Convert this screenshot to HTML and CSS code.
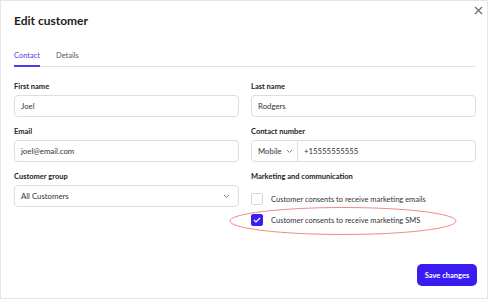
FILE: index.html
```html
<!DOCTYPE html>
<html lang="en">
<head>
    <meta charset="UTF-8">
    <meta name="viewport" content="width=device-width, initial-scale=1.0">
    <title>Edit customer</title>
    <link rel="stylesheet" href="styles.css">
</head>
<body>
    <div class="modal">
        <button class="close" aria-label="Close">
            <svg width="9" height="9" viewBox="0 0 9 9"><path d="M1 1L8 8M8 1L1 8" stroke="#6b6b6b" stroke-width="1.2" fill="none"/></svg>
        </button>

        <h1 class="title">Edit customer</h1>

        <div class="tabs">
            <span class="tab active">Contact</span>
            <span class="tab">Details</span>
        </div>

        <div class="grid">
            <div class="field">
                <label>First name</label>
                <div class="input">Joel</div>
            </div>
            <div class="field">
                <label>Last name</label>
                <div class="input">Rodgers</div>
            </div>
            <div class="field">
                <label>Email</label>
                <div class="input">joel@email.com</div>
            </div>
            <div class="field">
                <label>Contact number</label>
                <div class="input phone">
                    <span class="phone-type">Mobile
                        <svg width="7" height="5" viewBox="0 0 7 5"><path d="M1 1L3.5 3.5L6 1" stroke="#777" stroke-width="0.9" fill="none"/></svg>
                    </span>
                    <span class="phone-number">+15555555555</span>
                </div>
            </div>
            <div class="field">
                <label>Customer group</label>
                <div class="input select">
                    <span>All Customers</span>
                    <svg width="7" height="5" viewBox="0 0 7 5"><path d="M1 1L3.5 3.5L6 1" stroke="#777" stroke-width="0.9" fill="none"/></svg>
                </div>
            </div>
            <div class="field">
                <label>Marketing and communication</label>
                <div class="checks">
                    <div class="check-row">
                        <span class="checkbox"></span>
                        <span>Customer consents to receive marketing emails</span>
                    </div>
                    <div class="check-row">
                        <span class="checkbox checked">
                            <svg width="8" height="6" viewBox="0 0 8 6"><path d="M1 3L3 5L7 1" stroke="#fff" stroke-width="1.1" fill="none"/></svg>
                        </span>
                        <span>Customer consents to receive marketing SMS</span>
                    </div>
                </div>
            </div>
        </div>

        <div class="footer">
            <button class="save">Save changes</button>
        </div>

        <svg class="highlight" width="228" height="30" viewBox="0 0 228 30">
            <ellipse cx="114" cy="15" rx="113" ry="13.5" stroke="#ee8a8a" stroke-width="1" fill="none"/>
        </svg>
    </div>
</body>
</html>
```

FILE: styles.css
```css
body {
    margin: 0;
    font-family: Lato, "Open Sans", Arial, sans-serif;
    background: #fff;
    color: #222;
}
.modal {
    position: relative;
    box-sizing: border-box;
    width: 488px;
    height: 299px;
    border: 1px solid #e6e6e6;
    padding: 11px 11px 12px 13px;
    display: flex;
    flex-direction: column;
}
.close {
    position: absolute;
    top: 5px;
    right: 4px;
    border: none;
    background: none;
    padding: 0;
    line-height: 0;
}
.title {
    margin: 0;
    font-size: 12px;
    line-height: 18px;
    font-weight: 700;
    color: #1d1d1d;
}
.tabs {
    display: flex;
    gap: 16px;
    margin-top: 19px;
    border-bottom: 1px solid #e3e3e3;
}
.tab {
    font-size: 7.5px;
    line-height: 14px;
    padding-bottom: 3px;
    color: #555;
}
.tab.active {
    color: #4b3cf0;
    box-shadow: inset 0 -2px 0 #4b3cf0;
    margin-bottom: -1px;
    padding-bottom: 4px;
}
.grid {
    display: grid;
    grid-template-columns: 1fr 1fr;
    column-gap: 12px;
    margin-top: 13px;
}
.field {
    margin-bottom: 8px;
}
label {
    display: block;
    font-size: 7.5px;
    font-weight: 700;
    line-height: 14px;
    margin-bottom: 1px;
    color: #222;
}
.input {
    box-sizing: border-box;
    height: 22px;
    border: 1px solid #dedede;
    border-radius: 4px;
    padding: 0 6px;
    display: flex;
    align-items: center;
    font-size: 7.8px;
    color: #333;
}
.phone {
    padding: 0;
}
.phone-type {
    display: flex;
    align-items: center;
    gap: 4px;
    width: 46px;
    box-sizing: border-box;
    height: 100%;
    padding-left: 6px;
    border-right: 1px solid #dedede;
}
.phone-number {
    padding-left: 6px;
}
.select {
    justify-content: space-between;
    padding-right: 8px;
}
.checks {
    display: flex;
    flex-direction: column;
    gap: 9px;
    margin-top: 9px;
}
.check-row {
    display: flex;
    align-items: center;
    gap: 8px;
    font-size: 7.5px;
    color: #333;
}
.checkbox {
    box-sizing: border-box;
    width: 12px;
    height: 12px;
    border: 1px solid #d4d4d4;
    border-radius: 2px;
    display: flex;
    align-items: center;
    justify-content: center;
}
.checkbox.checked {
    background: #3a1ff0;
    border-color: #3a1ff0;
}
.footer {
    margin-top: auto;
    display: flex;
    justify-content: flex-end;
    margin-right: -1px;
}
.save {
    width: 60px;
    height: 22px;
    border: none;
    border-radius: 5px;
    background: #3a1cf2;
    color: #fff;
    font-family: Lato, Arial, sans-serif;
    font-size: 7.5px;
    font-weight: 700;
    padding: 0;
}
.highlight {
    position: absolute;
    left: 228px;
    top: 205px;
}
```
